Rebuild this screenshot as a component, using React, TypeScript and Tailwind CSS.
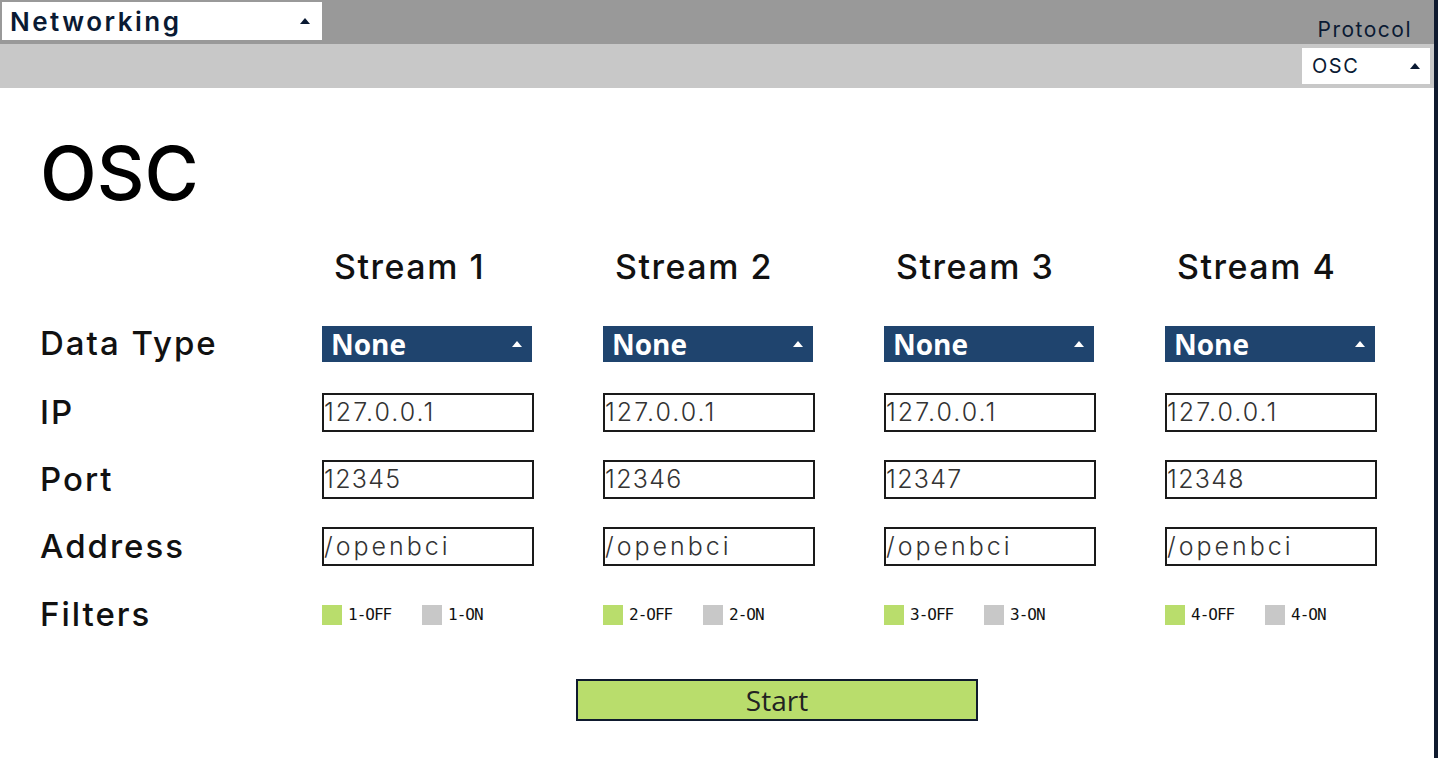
import React from 'react';

const HEAD = { fontFamily: 'Inter, "DejaVu Sans", sans-serif' };

// little up-arrow used by the dropdowns
const UpArrow: React.FC<{ color: string }> = ({ color }) => (
  <svg width="10" height="6" viewBox="0 0 10 6">
    <polygon points="5,0 10,6 0,6" fill={color} />
  </svg>
);

const streams = [
  { n: 1, port: '12345' },
  { n: 2, port: '12346' },
  { n: 3, port: '12347' },
  { n: 4, port: '12348' },
];

const TextField: React.FC<{ value: string; track: string }> = ({ value, track }) => (
  <div
    className={`w-[212px] h-[39px] border-2 border-[#1a1a1a] flex items-center text-[25px] font-light text-[#333] leading-none ${track}`}
    style={HEAD}
  >
    {value}
  </div>
);

const Row: React.FC<{ label: string; h: string; children: (s: typeof streams[0]) => React.ReactNode }> = ({ label, h, children }) => (
  <div className={`flex items-center ${h}`}>
    <div className="w-[322px] shrink-0 pl-10 text-[33px] font-medium tracking-[2px] text-[#111]" style={HEAD}>
      {label}
    </div>
    {streams.map(s => (
      <div key={s.n} className="w-[281px] shrink-0">
        {children(s)}
      </div>
    ))}
  </div>
);

export default function App() {
  return (
    <div className="flex w-[1438px] h-[758px] bg-white overflow-hidden">
      <div className="flex-1 min-w-0 flex flex-col">
        {/* top bar */}
        <div className="h-[44px] bg-[#999999] flex items-start justify-between pt-[2px] pl-[2px]">
          <div className="w-[320px] h-[38px] bg-white flex items-center justify-between pl-2 pr-3">
            <span className="text-[26px] font-semibold tracking-[2.5px] text-[#0a1a33]" style={HEAD}>Networking</span>
            <UpArrow color="#0a1a33" />
          </div>
          <div className="pt-[12px] pr-[22px] text-[21px] tracking-[1.5px] text-[#0a1a33]" style={HEAD}>Protocol</div>
        </div>
        {/* protocol bar */}
        <div className="h-[44px] bg-[#c8c8c8] flex items-center justify-end pr-[4px]">
          <div className="w-[128px] h-[36px] bg-white flex items-center justify-between pl-[10px] pr-[10px]">
            <span className="text-[20px] text-[#0a1a33] tracking-[1.5px]" style={HEAD}>OSC</span>
            <UpArrow color="#0a1a33" />
          </div>
        </div>

        {/* content */}
        <div className="flex-1 flex flex-col">
          <div className="pl-10 pt-[48px] h-[150px] text-[74px] font-medium text-black leading-none" style={HEAD}>
            OSC
          </div>
          <div className="flex h-[56px] items-center">
            <div className="w-[322px] shrink-0" />
            {streams.map(s => (
              <div key={s.n} className="w-[281px] shrink-0 pl-3 text-[34px] font-medium tracking-[1.5px] text-[#111]" style={HEAD}>
                Stream {s.n}
              </div>
            ))}
          </div>
          <div className="h-[30px]" />
          <Row label="Data Type" h="h-[40px]">
            {() => (
              <div className="w-[210px] h-[36px] bg-[#1f446e] flex items-center justify-between pl-[9px] pr-[10px]">
                <span className="text-[28px] font-bold text-white" style={{ fontFamily: '"Open Sans", sans-serif' }}>None</span>
                <UpArrow color="#ffffff" />
              </div>
            )}
          </Row>
          <div className="h-[29px]" />
          <Row label="IP" h="h-[39px]">{() => <TextField value="127.0.0.1" track="tracking-[2px]" />}</Row>
          <div className="h-[28px]" />
          <Row label="Port" h="h-[39px]">{s => <TextField value={s.port} track="tracking-[1.3px]" />}</Row>
          <div className="h-[28px]" />
          <Row label="Address" h="h-[39px]">{() => <TextField value="/openbci" track="tracking-[3px]" />}</Row>
          <div className="h-[30px]" />
          <Row label="Filters" h="h-[38px]">
            {s => (
              <div className="flex items-center text-[16px] tracking-[-1px] text-[#111]" style={{ fontFamily: '"DejaVu Sans Mono", monospace' }}>
                <span className="w-5 h-5 bg-[#b9dd6c]" />
                <span className="ml-[6px] w-[74px]">{s.n}-OFF</span>
                <span className="w-5 h-5 bg-[#c8c8c8]" />
                <span className="ml-[6px]">{s.n}-ON</span>
              </div>
            )}
          </Row>
          <div className="flex justify-start pl-[576px] pt-[45px]">
            <div
              className="w-[402px] h-[42px] bg-[#b9dd6c] border-2 border-[#0f1a2e] flex items-center justify-center text-[28px] text-[#222]"
              style={{ fontFamily: '"Open Sans", sans-serif' }}
            >
              Start
            </div>
          </div>
        </div>
      </div>
      <div className="w-[4px] shrink-0 bg-[#0f1a2e]" />
    </div>
  );
}
